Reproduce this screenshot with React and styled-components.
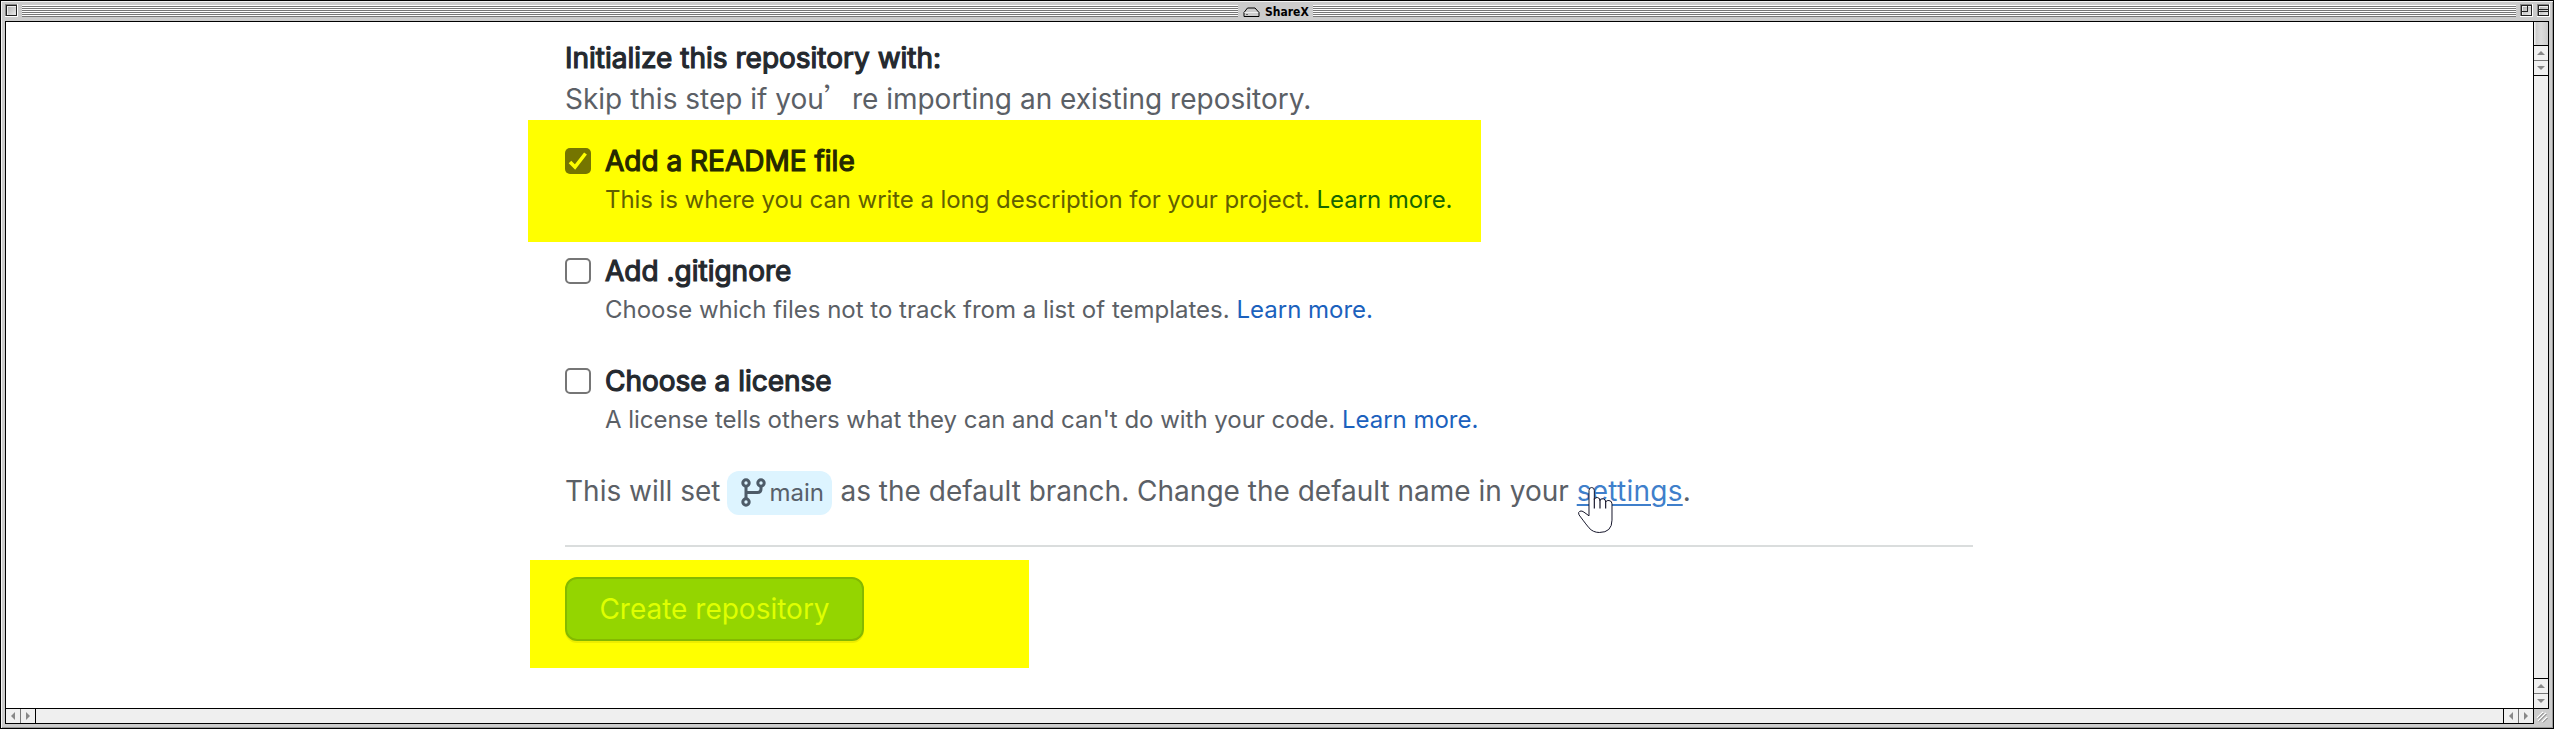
import React from "react";
import styled, { createGlobalStyle, css } from "styled-components";

const Global = createGlobalStyle`
  *, *::before, *::after { box-sizing: border-box; }
  html, body, #root { height: 100%; margin: 0; }
  body { overflow: hidden; background: #000; font-family: Inter, "Liberation Sans", sans-serif; }
`;

/* ---------- window frame ---------- */
const Window = styled.div`
  height: 729px;
  display: flex;
  flex-direction: column;
  padding: 0 4px 4px;
  background: #ccc;
  border: 1px solid #000;
  box-shadow: inset 1px 1px 0 #f4f4f4, inset -1px -1px 0 #999;
`;
const TitleBar = styled.header`
  height: 20px;
  display: flex;
  align-items: flex-start;
  padding: 3px 0 0;
  flex: none;
`;
const Stripes = styled.div`
  flex: ${(p) => p.$w ? `0 0 ${p.$w}px` : "1"};
  height: 12px;
  margin-top: 1px;
  background: repeating-linear-gradient(#fff 0 1px, #777 1px 2px);
`;
const WinButton = styled.svg`
  width: 13px;
  height: 13px;
  flex: none;
  margin: ${(p) => p.$m};
`;
const Caption = styled.div`
  display: flex;
  align-items: center;
  width: 75px;
  height: 16px;
  padding-left: 5px;
  gap: 5px;
  font: bold 12px/14px "DejaVu Sans Condensed", "DejaVu Sans", sans-serif;
  color: #000;
`;
const Body = styled.div`
  flex: 1;
  display: grid;
  grid-template: 1fr 15px / 1fr 15px;
  border: 1px solid #000;
  background: #fff;
  min-height: 0;
`;
const ScrollBar = styled.div`
  display: flex;
  flex-direction: ${(p) => (p.$vertical ? "column" : "row")};
  background: #efefef;
  ${(p) => (p.$vertical ? "border-left" : "border-top")}: 1px solid #000;
  ${(p) => !p.$vertical && css`border-right: 1px solid #000; margin-right: -1px;`}
`;
const Thumb = styled.div`
  height: 24px;
  border-bottom: 1px solid #000;
  background: linear-gradient(90deg, #eee 0 1px, #ccc 2px, #ddd 50%, #ccc);
`;
const Track = styled.div`
  flex: 1;
`;
const Arrow = styled.div`
  display: grid;
  place-items: center;
  flex: 0 0 15px;
  background: #f0f0f0;
  border: 0 solid ${(p) => (p.$dark ? "#000" : "#777")};
  border-${(p) => p.$edge}-width: 1px;
`;
const Corner = styled.div`
  margin: 0 -1px -1px 1px;
  background: #ccc;
  border-top: 1px solid #000;
  svg { display: block; }
`;

/* ---------- form ---------- */
const Page = styled.main`
  padding: 15px 0 0 559px;
  color: #5b6066;
  font-size: 28px;
  line-height: 42px;
  overflow: hidden;
`;
const boldFace = css`
  font-weight: 400;
  -webkit-text-stroke: 1.2px currentColor;
`;
const Heading = styled.div`
  ${boldFace}
  height: 41px;
  color: #24292f;
`;
const Intro = styled.div`
  height: 42px;
`;
const WideQuote = styled.span`
  font-family: "Noto Sans CJK SC", sans-serif;
  line-height: 1;
`;
const Highlight = styled.div`
  width: ${(p) => p.$w}px;
  height: ${(p) => p.$h}px;
  padding: ${(p) => p.$pad};
  margin: ${(p) => p.$m};
  background: #ff0;
`;
const Option = styled.label`
  display: flex;
  gap: 14px;
  height: 78px;
  margin-top: ${(p) => p.$top || 0}px;
  color: ${(p) => (p.$lit ? "#625f00" : "#5b6066")};
`;
const OptionTitle = styled.div`
  ${boldFace}
  color: ${(p) => (p.$lit ? "#262900" : "#24292f")};
`;
const OptionNote = styled.div`
  font-size: 24px;
  line-height: 36px;
  white-space: nowrap;
  letter-spacing: ${(p) => p.$track || "0"};
`;
const Link = styled.a`
  color: ${(p) => (p.$lit ? "#176600" : "#1b61bd")};
`;
const Box = styled.span`
  display: block;
  flex: none;
  width: 26px;
  height: 26px;
  margin-top: 8px;
  border-radius: 5px;
  border: ${(p) => (p.$on ? "0" : "2px solid #767676")};
  background: ${(p) => (p.$on ? "#757500" : "#fff")};
  svg { display: block; }
`;
const BranchLine = styled.div`
  display: flex;
  align-items: flex-start;
  height: 44px;
  margin-top: 33px;
  line-height: 40px;
  white-space: pre;
`;
const Branch = styled.span`
  display: flex;
  align-items: center;
  width: 105px;
  height: 44px;
  margin: 0 8px 0 7px;
  padding-left: 14px;
  border-radius: 12px;
  background: #ddf4ff;
  font-size: 24px;
  color: #57606a;
  svg { flex: none; margin-right: 1px; margin-top: -3px; }
`;
const Settings = styled.a`
  position: relative;
  color: #3f7fcb;
  letter-spacing: 0.25px;
  text-decoration: underline;
  text-decoration-thickness: 2px;
  text-underline-offset: 3px;
`;
const Hand = styled.svg`
  position: absolute;
  left: 0;
  top: 15px;
  width: 36.67px;
  height: 48px;
`;
const Rule = styled.hr`
  width: 1408px;
  height: 2px;
  margin: 30px 0 13px;
  border: 0;
  background: #dadddd;
`;
const Create = styled.button`
  display: block;
  width: 299px;
  height: 64px;
  padding: 0;
  border: 2px solid #84b900;
  border-radius: 12px;
  background: #94d500;
  box-shadow: 0 2px 0 #eded00;
  color: #dfff00;
  font: 400 28px/56px Inter, sans-serif;
  text-align: center;
`;

const ArrowGlyph = ({ dir }) => {
  const pts = { up: "3,9 7,5 11,9", down: "3,5 11,5 7,9", left: "9,3 9,11 5,7", right: "5,3 9,7 5,11" };
  return (
    <svg width="14" height="14" viewBox="0 0 14 14">
      <polygon points={pts[dir]} fill="#888" />
    </svg>
  );
};

const WinBox = ({ m, children }) => (
  <WinButton $m={m} viewBox="0 0 13 13" shapeRendering="crispEdges">
    <rect width="13" height="13" fill="#fff" />
    <rect width="12" height="12" fill="#888" />
    <rect x="1.5" y="1.5" width="10" height="10" fill="url(#bevel)" stroke="#222" />
    <path d="M2.5 10.5V2.5H10.5" stroke="#eee" fill="none" />
    {children}
  </WinButton>
);

const LearnMore = ({ lit }) => <Link $lit={lit}>Learn more.</Link>;

function Choice({ title, note, on, lit, top, noteTrack }) {
  return (
    <Option $top={top} $lit={lit}>
      <Box $on={on}>
        {on && (
          <svg width="26" height="26" viewBox="0 0 26 26">
            <path d="M5 14l5 5L20.5 5.5" fill="none" stroke="#ff0" strokeWidth="3.6" />
          </svg>
        )}
      </Box>
      <div>
        <OptionTitle $lit={lit}>{title}</OptionTitle>
        <OptionNote $track={noteTrack}>{note} <LearnMore lit={lit} /></OptionNote>
      </div>
    </Option>
  );
}

export default function App() {
  return (
    <>
      <Global />
      <Window>
        <TitleBar>
          <WinBox m="0 4px 0 0">
            <defs>
              <linearGradient id="bevel" x1="0" y1="0" x2="1" y2="1">
                <stop offset="0" stopColor="#aaa" />
                <stop offset="1" stopColor="#eee" />
              </linearGradient>
            </defs>
          </WinBox>
          <Stripes />
          <Caption>
            <svg width="17" height="11" viewBox="0 0 17 11">
              <path d="M1 5.5L4.5 1H12L16 5.5V9.5H1Z" fill="#ccc" stroke="#000" />
              <path d="M1.5 5.5H15" stroke="#eee" />
              <path d="M3 7.5H5" stroke="#666" />
            </svg>
            <span>ShareX</span>
          </Caption>
          <Stripes $w={1203} />
          <WinBox m="0 4px">
            <path d="M2 7.5H7.5V2" stroke="#222" fill="none" />
          </WinBox>
          <WinBox m="0 -1px 0 0">
            <path d="M2 5.5H11M2 7.5H11" stroke="#222" fill="none" />
          </WinBox>
        </TitleBar>
        <Body>
          <Page>
            <Heading>Initialize this repository with:</Heading>
            <Intro>Skip this step if you<WideQuote>’</WideQuote>re importing an existing repository.</Intro>
            <Highlight $w={953} $h={122} $pad="20px 0 0 37px" $m="0 0 0 -37px">
              <Choice on lit noteTrack="-0.065px" title="Add a README file" note="This is where you can write a long description for your project." />
            </Highlight>
            <Choice top={8} title="Add .gitignore" note="Choose which files not to track from a list of templates." />
            <Choice top={32} noteTrack="-0.02px" title="Choose a license" note="A license tells others what they can and can't do with your code." />
            <BranchLine>
              <span>This will set</span>
              <Branch>
                <svg width="27" height="30" viewBox="0 0 27 30" fill="none" stroke="#4d5b68" strokeWidth="3">
                  <circle cx="5" cy="6" r="3.2" />
                  <circle cx="5" cy="25" r="3.2" />
                  <circle cx="20" cy="6" r="3.2" />
                  <path d="M5 9V22M20 9V12Q20 15.500 16.500 15.500H5" />
                </svg>
                main
              </Branch>
              <span>as the default branch. Change the default name in your </span>
              <Settings>
                settings
                <Hand viewBox="290 78 110 143">
                  <path
                    d="M326 167V91Q326 82 334 82Q342 82 342 91V118Q345 111 351 112Q359 113 359 121Q362 114 369 116Q376 117 376 125Q380 120 386 121Q395 122 395 131V180Q395 217 357 217Q338 217 326 203Q316 191 308 180L296 164Q292 156 299 153Q305 151 311 156Z"
                    fill="#fff" stroke="#15152a" strokeWidth="3" strokeLinejoin="round"
                  />
                  <path d="M342 115V145M359 119V145M376 122V145" stroke="#15152a" strokeWidth="3.500" />
                </Hand>
              </Settings>
              <span>.</span>
            </BranchLine>
            <Rule />
            <Highlight $w={499} $h={108} $pad="17px 0 0 35px" $m="0 0 0 -35px">
              <Create>Create repository</Create>
            </Highlight>
          </Page>
          <ScrollBar $vertical>
            <Thumb />
            <Arrow $edge="bottom"><ArrowGlyph dir="up" /></Arrow>
            <Arrow $edge="bottom" $dark><ArrowGlyph dir="down" /></Arrow>
            <Track />
            <Arrow $edge="top" $dark><ArrowGlyph dir="up" /></Arrow>
            <Arrow $edge="top"><ArrowGlyph dir="down" /></Arrow>
          </ScrollBar>
          <ScrollBar>
            <Arrow $edge="right"><ArrowGlyph dir="left" /></Arrow>
            <Arrow $edge="right" $dark><ArrowGlyph dir="right" /></Arrow>
            <Track />
            <Arrow $edge="left" $dark><ArrowGlyph dir="left" /></Arrow>
            <Arrow $edge="left"><ArrowGlyph dir="right" /></Arrow>
          </ScrollBar>
          <Corner>
            <svg width="15" height="15" viewBox="0 0 15 15">
              <path d="M3 9L9 3M4 12L12 4M8 13L13 8" stroke="#fff" strokeWidth="1.200" />
              <path d="M4 9.500L9.500 4M5 12.500L12.500 5M9 13.500L13.500 9" stroke="#777" />
            </svg>
          </Corner>
        </Body>
      </Window>
    </>
  );
}
